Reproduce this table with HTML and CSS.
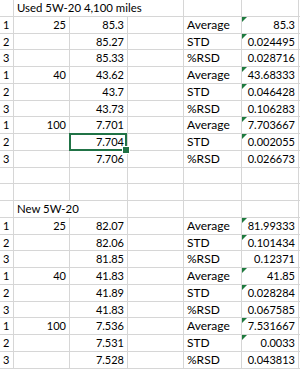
FILE: index.html
```html
<!DOCTYPE html>
<html lang="en">
<head>
  <meta charset="UTF-8">
  <meta name="viewport" content="width=device-width, initial-scale=1.0">
  <title>Oil samples</title>
  <link rel="stylesheet" href="styles.css">
</head>
<body>
  <div class="sheet">

    <!-- Used oil -->
    <div class="cell"></div>
    <div class="cell title span3">Used 5W-20 4,100 miles</div>
    <div class="cell"></div>
    <div class="cell"></div>
    <div class="cell"></div>

    <div class="cell num first">1</div><div class="cell num">25</div><div class="cell num">85.3</div><div class="cell"></div><div class="cell txt">Average</div><div class="cell num flag">85.3</div><div class="cell"></div>
    <div class="cell num first">2</div><div class="cell"></div><div class="cell num">85.27</div><div class="cell"></div><div class="cell txt">STD</div><div class="cell num flag">0.024495</div><div class="cell"></div>
    <div class="cell num first">3</div><div class="cell"></div><div class="cell num">85.33</div><div class="cell"></div><div class="cell txt">%RSD</div><div class="cell num">0.028716</div><div class="cell"></div>
    <div class="cell num first">1</div><div class="cell num">40</div><div class="cell num">43.62</div><div class="cell"></div><div class="cell txt">Average</div><div class="cell num flag">43.68333</div><div class="cell"></div>
    <div class="cell num first">2</div><div class="cell"></div><div class="cell num">43.7</div><div class="cell"></div><div class="cell txt">STD</div><div class="cell num flag">0.046428</div><div class="cell"></div>
    <div class="cell num first">3</div><div class="cell"></div><div class="cell num">43.73</div><div class="cell"></div><div class="cell txt">%RSD</div><div class="cell num">0.106283</div><div class="cell"></div>
    <div class="cell num first">1</div><div class="cell num">100</div><div class="cell num">7.701</div><div class="cell"></div><div class="cell txt">Average</div><div class="cell num flag">7.703667</div><div class="cell"></div>
    <div class="cell num first">2</div><div class="cell"></div><div class="cell num active">7.704</div><div class="cell"></div><div class="cell txt">STD</div><div class="cell num flag">0.002055</div><div class="cell"></div>
    <div class="cell num first">3</div><div class="cell"></div><div class="cell num">7.706</div><div class="cell"></div><div class="cell txt">%RSD</div><div class="cell num">0.026673</div><div class="cell"></div>

    <!-- blank rows -->
    <div class="cell"></div><div class="cell"></div><div class="cell"></div><div class="cell"></div><div class="cell"></div><div class="cell"></div><div class="cell"></div>
    <div class="cell"></div><div class="cell"></div><div class="cell"></div><div class="cell"></div><div class="cell"></div><div class="cell"></div><div class="cell"></div>

    <!-- New oil -->
    <div class="cell"></div>
    <div class="cell title span2">New 5W-20</div>
    <div class="cell"></div>
    <div class="cell"></div>
    <div class="cell"></div>
    <div class="cell"></div>

    <div class="cell num first">1</div><div class="cell num">25</div><div class="cell num">82.07</div><div class="cell"></div><div class="cell txt">Average</div><div class="cell num flag">81.99333</div><div class="cell"></div>
    <div class="cell num first">2</div><div class="cell"></div><div class="cell num">82.06</div><div class="cell"></div><div class="cell txt">STD</div><div class="cell num flag">0.101434</div><div class="cell"></div>
    <div class="cell num first">3</div><div class="cell"></div><div class="cell num">81.85</div><div class="cell"></div><div class="cell txt">%RSD</div><div class="cell num">0.12371</div><div class="cell"></div>
    <div class="cell num first">1</div><div class="cell num">40</div><div class="cell num">41.83</div><div class="cell"></div><div class="cell txt">Average</div><div class="cell num flag">41.85</div><div class="cell"></div>
    <div class="cell num first">2</div><div class="cell"></div><div class="cell num">41.89</div><div class="cell"></div><div class="cell txt">STD</div><div class="cell num flag">0.028284</div><div class="cell"></div>
    <div class="cell num first">3</div><div class="cell"></div><div class="cell num">41.83</div><div class="cell"></div><div class="cell txt">%RSD</div><div class="cell num">0.067585</div><div class="cell"></div>
    <div class="cell num first">1</div><div class="cell num">100</div><div class="cell num">7.536</div><div class="cell"></div><div class="cell txt">Average</div><div class="cell num flag">7.531667</div><div class="cell"></div>
    <div class="cell num first">2</div><div class="cell"></div><div class="cell num">7.531</div><div class="cell"></div><div class="cell txt">STD</div><div class="cell num flag">0.0033</div><div class="cell"></div>
    <div class="cell num first">3</div><div class="cell"></div><div class="cell num">7.528</div><div class="cell"></div><div class="cell txt">%RSD</div><div class="cell num">0.043813</div><div class="cell"></div>

  </div>
</body>
</html>
```

FILE: styles.css
```css
* {
  margin: 0;
  padding: 0;
  box-sizing: border-box;
}

body {
  background-color: #fff;
  overflow: hidden;
}

/* Spreadsheet grid */
.sheet {
  display: grid;
  grid-template-columns: 14px 56px 58px 56px 58px 57px 1fr;
  grid-auto-rows: 16.75px;
  font-family: Lato, "Open Sans", sans-serif;
  font-size: 11px;
  color: #000;
}

.cell {
  position: relative;
  border-right: 1px solid #d6d6d6;
  border-bottom: 1px solid #d6d6d6;
  padding: 0 3px;
  line-height: 15px;
  white-space: nowrap;
}

.num {
  text-align: right;
}

.txt {
  font-size: 12px;
}

.title {
  font-size: 11.4px;
}

.first {
  padding-right: 4px;
}

.span2 {
  grid-column: span 2;
}

.span3 {
  grid-column: span 3;
}

/* Green error marker */
.flag::before {
  content: '';
  position: absolute;
  top: 0;
  left: 0;
  border-top: 5px solid #1e7a3e;
  border-right: 5px solid transparent;
}

/* Selected cell */
.active {
  z-index: 2;
}

.active::before {
  content: '';
  position: absolute;
  top: -1px;
  left: -1px;
  right: 0;
  bottom: -1px;
  border: 2px solid #217346;
}

.active::after {
  content: '';
  position: absolute;
  right: -3px;
  bottom: -4px;
  width: 6px;
  height: 6px;
  background-color: #217346;
  border: 1px solid #fff;
}
```
